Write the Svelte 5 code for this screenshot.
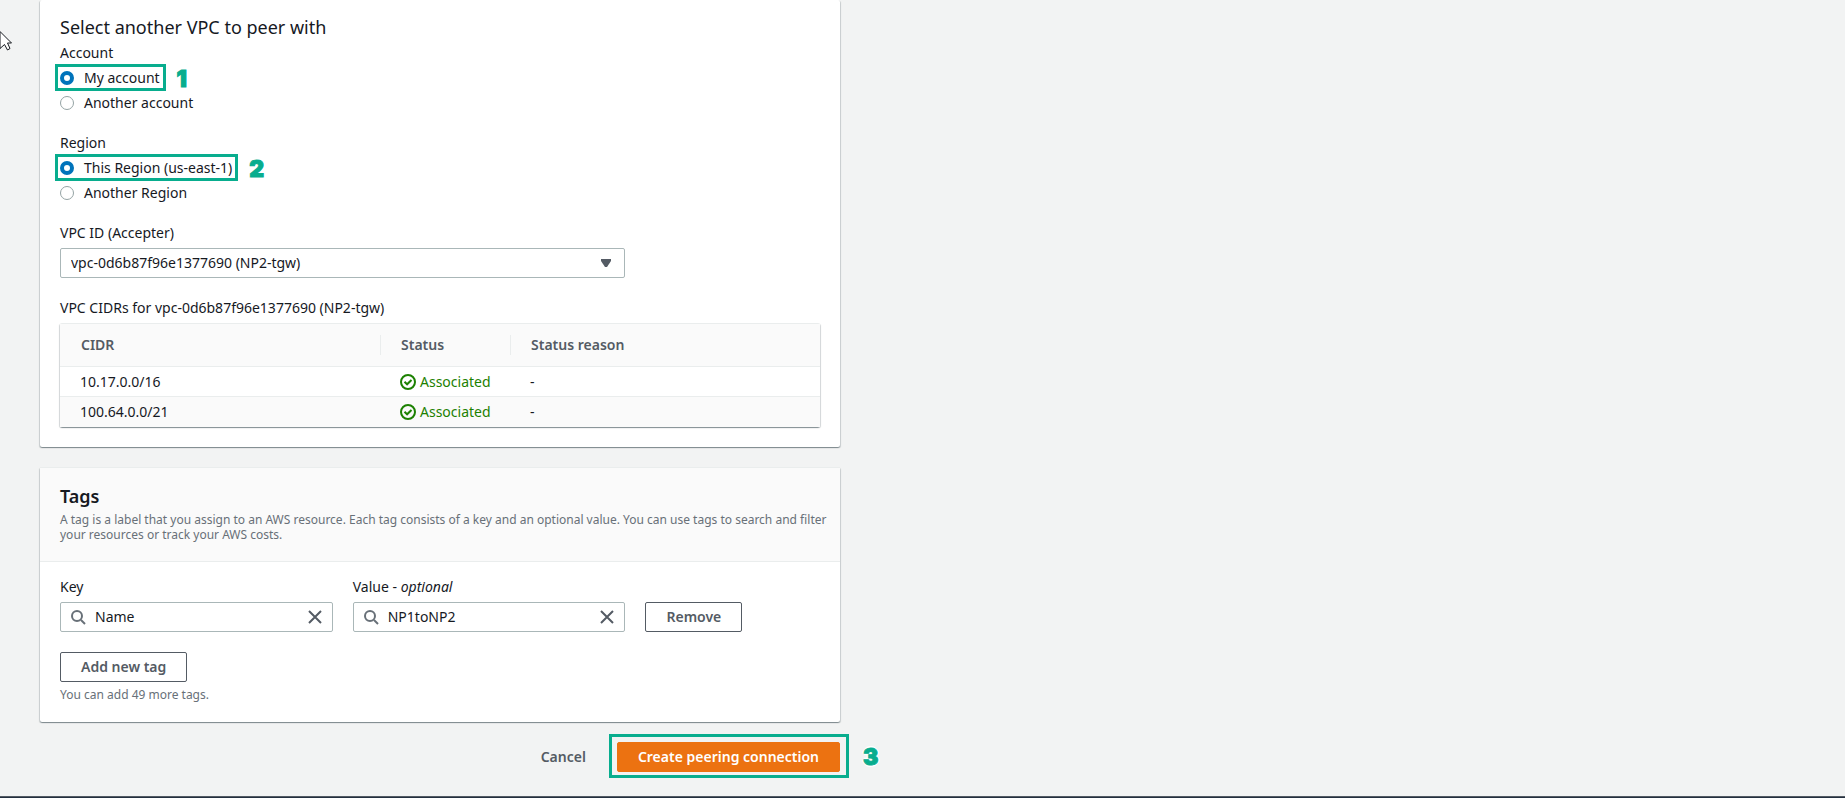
<script>
    const accounts = [
        { value: 'mine', label: 'My account', step: 1 },
        { value: 'other', label: 'Another account' },
    ];
    const regions = [
        { value: 'this', label: 'This Region (us-east-1)', step: 2 },
        { value: 'other', label: 'Another Region' },
    ];
    const vpcs = ['vpc-0d6b87f96e1377690 (NP2-tgw)'];
    const cidrs = [
        { cidr: '10.17.0.0/16', status: 'Associated', reason: '-' },
        { cidr: '100.64.0.0/21', status: 'Associated', reason: '-' },
    ];

    let account = 'mine';
    let region = 'this';
    let vpc = vpcs[0];
    let tagKey = 'Name';
    let tagValue = 'NP1toNP2';

    function removeTag() {
        tagKey = '';
        tagValue = '';
    }
</script>

{#snippet searchIcon()}
    <svg class="search-icon" viewBox="0 0 16 16" aria-hidden="true">
        <circle cx="7" cy="7" r="5" />
        <path d="M11 11l4 4" />
    </svg>
{/snippet}

{#snippet closeIcon()}
    <svg class="close-icon" viewBox="0 0 16 16" aria-hidden="true">
        <path d="M2 2l12 12M14 2L2 14" />
    </svg>
{/snippet}

<div class="page">
    <main>
        <section class="panel first">
            <h2>Select another VPC to peer with</h2>

            <fieldset>
                <legend>Account</legend>
                {#each accounts as a}
                    <label class="radio">
                        <input type="radio" name="account" value={a.value} bind:group={account} />
                        {a.label}
                        {#if a.step}<span class="mark"><b>{a.step}</b></span>{/if}
                    </label>
                {/each}
            </fieldset>

            <fieldset>
                <legend>Region</legend>
                {#each regions as r}
                    <label class="radio">
                        <input type="radio" name="region" value={r.value} bind:group={region} />
                        {r.label}
                        {#if r.step}<span class="mark"><b>{r.step}</b></span>{/if}
                    </label>
                {/each}
            </fieldset>

            <div class="columns">
                <div class="field wide">
                    <label for="vpc">VPC ID (Accepter)</label>
                    <div class="select">
                        <select id="vpc" bind:value={vpc}>
                            {#each vpcs as v}
                                <option value={v}>{v}</option>
                            {/each}
                        </select>
                        <svg viewBox="0 0 10 8" aria-hidden="true"><path d="M0 0h10v2L6 8H4L0 2z" /></svg>
                    </div>
                </div>
            </div>

            <div class="field">
                <span id="cidr-title">VPC CIDRs for {vpc}</span>
                <table aria-labelledby="cidr-title">
                    <thead>
                        <tr>
                            <th class="cidr"><span>CIDR</span></th>
                            <th class="status"><span>Status</span></th>
                            <th><span>Status reason</span></th>
                        </tr>
                    </thead>
                    <tbody>
                        {#each cidrs as row}
                            <tr>
                                <td>{row.cidr}</td>
                                <td>
                                    <span class="ok">
                                        <svg viewBox="0 0 16 16" aria-hidden="true">
                                            <circle cx="8" cy="8" r="7" />
                                            <path d="M4.5 7.8l2.6 2.5 4.4-4.3" />
                                        </svg>
                                        {row.status}
                                    </span>
                                </td>
                                <td>{row.reason}</td>
                            </tr>
                        {/each}
                    </tbody>
                </table>
            </div>
        </section>

        <section class="panel">
            <header>
                <h3>Tags</h3>
                <p>
                    A tag is a label that you assign to an AWS resource. Each tag consists of a key and an
                    optional value. You can use tags to search and filter your resources or track your AWS costs.
                </p>
            </header>
            <div class="body">
                <div class="columns">
                    <div class="field">
                        <label for="tag-key">Key</label>
                        <div class="search">
                            {@render searchIcon()}
                            <input id="tag-key" type="text" bind:value={tagKey} />
                            <button class="clear" aria-label="Clear key" on:click={() => (tagKey = '')}>
                                {@render closeIcon()}
                            </button>
                        </div>
                    </div>
                    <div class="field">
                        <label for="tag-value">Value - <i>optional</i></label>
                        <div class="search">
                            {@render searchIcon()}
                            <input id="tag-value" type="text" bind:value={tagValue} />
                            <button class="clear" aria-label="Clear value" on:click={() => (tagValue = '')}>
                                {@render closeIcon()}
                            </button>
                        </div>
                    </div>
                    <button class="btn" on:click={removeTag}>Remove</button>
                </div>
                <div class="add">
                    <button class="btn">Add new tag</button>
                    <p>You can add 49 more tags.</p>
                </div>
            </div>
        </section>

        <div class="actions">
            <button class="btn link">Cancel</button>
            <div class="submit">
                <button class="btn primary">Create peering connection</button>
                <span class="mark"><b>3</b></span>
            </div>
        </div>
    </main>
    <footer></footer>

    <svg class="cursor" viewBox="0 0 13 20" aria-hidden="true">
        <path d="M0 .5L11.500 12H7.500L10 17.500L7.500 19L4.500 13.500L0 17.500z" />
    </svg>
</div>

<style>
    :global(body) { background: #f2f3f3; }

    .page {
        position: relative;
        display: flex;
        flex-direction: column;
        min-height: 100vh;
        box-sizing: border-box;
        overflow: hidden;
        color: #16191f;
        font: 14px/20px "Noto Sans", "Open Sans", sans-serif;
    }
    .page * { box-sizing: border-box; }

    main {
        flex: 1;
        width: calc(100% - 80px);
        max-width: 800px;
        margin-left: 40px;
    }

    h2, h3, p { margin: 0; }
    h2, h3 {
        margin-bottom: 4px;
        font-size: 18px;
        line-height: 24px;
        font-weight: 400;
    }
    h3 { font-weight: 600; }
    p { font-size: 12px; line-height: 15px; color: #687078; }

    .panel {
        margin-bottom: 20px;
        background: #fff;
        border-top: 1px solid #eaeded;
        border-radius: 2px;
        box-shadow: 0 1px 1px 0 rgba(0, 28, 36, 0.3), 1px 1px 1px 0 rgba(0, 28, 36, 0.15), -1px 1px 1px 0 rgba(0, 28, 36, 0.15);
    }
    .first { padding: 15px 20px 20px; border-top: 0; }

    header {
        padding: 16px 8px 19px 20px;
        background: #fafafa;
        border-bottom: 1px solid #eaeded;
    }
    .body { padding: 15px 20px 20px; }

    fieldset {
        display: flex;
        flex-direction: column;
        align-items: flex-start;
        gap: 5px;
        margin: 0 0 20px;
        padding: 0;
        border: 0;
    }
    legend { padding: 0 0 5px; }

    .radio {
        position: relative;
        display: flex;
        align-items: center;
        gap: 10px;
    }
    .radio input {
        appearance: none;
        width: 14px;
        height: 14px;
        margin: 0;
        border: 1px solid #95a3a4;
        border-radius: 50%;
        background: #fff;
    }
    .radio input:checked { border: 4px solid #0073bb; }

    /* numbered step outlines */
    .mark {
        position: absolute;
        inset: -4px -6px -3px -5px;
        border: 3px solid #08ad8e;
        pointer-events: none;
    }
    .mark b {
        position: absolute;
        top: 50%;
        left: 100%;
        margin: -11px 0 0 14px;
        color: #08ad8e;
        font: 900 23px/24px Inter, sans-serif;
        -webkit-text-stroke: 1px #08ad8e;
        text-shadow: 2px 0 #fff, -2px 0 #fff, 0 2px #fff, 0 -2px #fff;
    }

    .columns {
        display: grid;
        grid-template-columns: 25fr 25fr 16fr;
        gap: 20px;
        align-items: end;
        margin-bottom: 20px;
    }
    .field {
        display: flex;
        flex-direction: column;
        gap: 5px;
        min-width: 0;
    }
    .wide { grid-column: span 2; }

    .select { position: relative; }
    .select select {
        display: block;
        appearance: none;
        width: 100%;
        height: 30px;
        padding: 0 32px 0 10px;
        border: 1px solid #aab7b8;
        border-radius: 2px;
        background: #fff;
        color: inherit;
        font: inherit;
    }
    .select svg {
        position: absolute;
        top: 11px;
        right: 14px;
        width: 10px;
        height: 8px;
        fill: #545b64;
        pointer-events: none;
    }

    table {
        width: 100%;
        table-layout: fixed;
        border-spacing: 0;
        border-top: 1px solid #eaeded;
        border-radius: 2px;
        box-shadow: 0 1px 1px 0 rgba(0, 28, 36, 0.3), 1px 1px 1px 0 rgba(0, 28, 36, 0.15), -1px 1px 1px 0 rgba(0, 28, 36, 0.15);
    }
    .cidr { width: 320px; }
    .status { width: 130px; }
    th {
        padding: 11px 0;
        background: #fafafa;
        border-bottom: 1px solid #eaeded;
        color: #545b64;
        font-weight: 600;
        text-align: left;
    }
    th span { display: block; padding-left: 20px; border-left: 1px solid #eaeded; }
    th:first-child span { border-color: transparent; }
    td { height: 30px; padding: 0 0 0 20px; }
    tbody tr:first-child td { border-bottom: 1px solid #eaeded; }
    tbody tr:nth-child(even) { background: #fafafa; }

    .ok { display: flex; align-items: center; gap: 4px; color: #1d8102; }
    .ok svg { width: 16px; height: 16px; fill: none; stroke: #1d8102; stroke-width: 2; }

    .search {
        display: flex;
        align-items: center;
        height: 30px;
        padding: 0 9px;
        border: 1px solid #aab7b8;
        border-radius: 2px;
        background: #fff;
    }
    .search input {
        flex: 1;
        min-width: 0;
        padding: 0 9px;
        border: 0;
        outline: none;
        background: none;
        color: inherit;
        font: inherit;
    }
    .search-icon { width: 16px; height: 16px; fill: none; stroke: #687078; stroke-width: 2; }
    .close-icon { display: block; width: 16px; height: 16px; fill: none; stroke: #545b64; stroke-width: 2; }
    .clear { padding: 0; border: 0; background: none; cursor: pointer; }

    .btn {
        justify-self: start;
        height: 30px;
        padding: 0 20px;
        border: 1px solid #545b64;
        border-radius: 2px;
        background: #fff;
        color: #545b64;
        font: inherit;
        font-weight: 600;
        white-space: nowrap;
        cursor: pointer;
    }
    .primary { border-color: #ec7211; background: #ec7211; color: #fff; }
    .link { border-color: transparent; background: none; }
    .add p { margin-top: 5px; }

    .actions {
        display: flex;
        justify-content: flex-end;
        gap: 10px;
        margin-bottom: 24px;
    }
    .submit { position: relative; }
    .submit .mark { inset: -8px -9px -6px -8px; }
    .submit b { margin-left: 17px; }

    footer {
        flex: none;
        height: 2px;
        background: #232f3e;
        border-top: 1px solid #545b64;
    }

    .cursor {
        position: absolute;
        top: 31px;
        left: 0;
        width: 13px;
        height: 20px;
        fill: #fff;
        stroke: #16191f;
    }
</style>
